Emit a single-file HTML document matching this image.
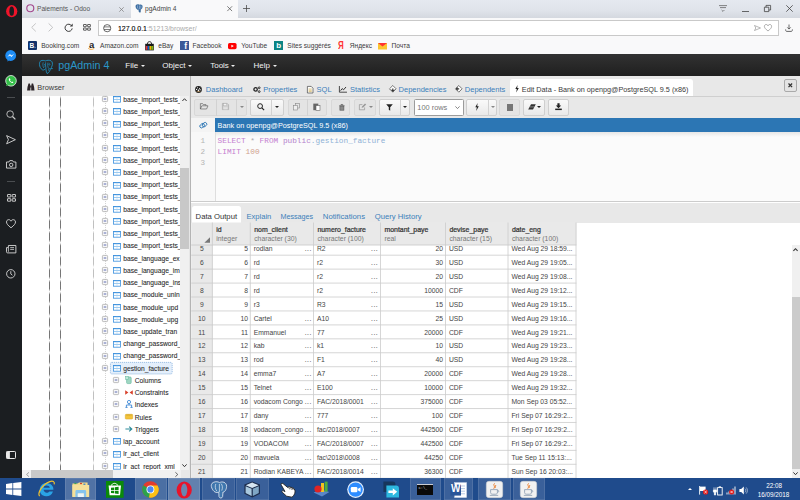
<!DOCTYPE html>
<html lang="fr"><head><meta charset="utf-8"><title>pgAdmin 4</title>
<style>
html,body{margin:0;padding:0;background:#fff;}
body{width:800px;height:500px;overflow:hidden;font-family:"Liberation Sans",sans-serif;}
#root{position:relative;width:800px;height:500px;overflow:hidden;background:#fff;}
.a{position:absolute;}
.t{position:absolute;white-space:nowrap;line-height:1;}
svg{position:absolute;overflow:visible;}
/* chrome */
#side{left:0;top:0;width:22px;height:478px;background:#1b1e21;}
#tabbar{left:22px;top:0;width:778px;height:17.5px;background:linear-gradient(#e5e9f0 0%,#dfe3ea 60%,#d4d8df 100%);}
#tab2{left:131px;top:0;width:106.5px;height:17.5px;background:#f9f9fa;}
#addr{left:22px;top:17.5px;width:778px;height:20px;background:#f9f9fa;}
#abox{left:98px;top:19.8px;width:680.6px;height:16px;background:#fff;border:0.8px solid #c9c9c9;box-sizing:border-box;}
#bm{left:22px;top:37.5px;width:778px;height:16.5px;background:#f9f9fa;}
.bmt{font-size:6.6px;color:#3a3a3a;top:42.7px;}
.tabt{font-size:6.6px;color:#555;top:6.2px;}
/* pgadmin */
#nav{left:22px;top:54px;width:778px;height:22px;background:linear-gradient(#323232,#1f1f1f);}
.menu{font-size:8px;color:#f2f2f2;top:62px;}
#bpanel{left:22px;top:76px;width:168px;height:402.5px;background:#fff;}
#bhead{left:22px;top:76px;width:168px;height:19.5px;background:#e8e8e8;}
#split{left:190.2px;top:76px;width:0.9px;height:402.5px;background:#b4b4b4;}
#rtabs{left:191px;top:76px;width:609px;height:20px;background:#e8e8e8;}
.rt{font-size:7.5px;color:#3b7fba;top:85.8px;}
#rtool{left:191px;top:96px;width:609px;height:22px;background:#e8e8e8;border-top:0.8px solid #cfcfcf;box-sizing:border-box;}
.btn{position:absolute;top:99.4px;height:16.4px;background:linear-gradient(#fafafa,#e9e9e9);border:0.7px solid #cfcfcf;box-sizing:border-box;border-radius:2px;}
.btn.dis{background:#e4e4e4;border-color:#d8d8d8;}
.bdiv{position:absolute;top:99.4px;height:16.4px;width:0.7px;background:#d2d2d2;}
#bluebar{left:215px;top:118px;width:585px;height:14px;background:#2c76b4;}
.tree{font-size:6.7px;color:#2a2a2a;line-height:10px;-webkit-text-stroke:0.08px #2a2a2a;}
.grid{font-size:6.75px;color:#444;}
.cell{position:absolute;box-sizing:border-box;border-right:0.8px solid #d0d0d0;border-bottom:0.8px solid #d0d0d0;background:#fff;overflow:hidden;}
.rn{background:#efefef;}
.hd{background:#ebebeb;}
#task{left:0;top:478px;width:800px;height:22px;background:#1f4b8c;}
</style></head>
<body>
<div id="root">
<div class="a" id="tabbar"></div>
<div class="a" id="tab2"></div>
<svg style="left:26.2px;top:4.4px" width="8.6" height="8.6" viewBox="0 0 8.6 8.6"><circle cx="4.3" cy="4.3" r="3.5" fill="none" stroke="#a3478d" stroke-width="1.15"/></svg>
<div class="t tabt" style="left:37px">Paiements - Odoo</div>
<svg style="left:119px;top:6.5px" width="5" height="5" viewBox="0 0 5 5"><path d="M0.3 0.3L4.7 4.7M4.7 0.3L0.3 4.7" stroke="#777" stroke-width="0.7" fill="none"/></svg>
<svg style="left:134.5px;top:4px" width="8" height="9" viewBox="0 0 8 9"><path d="M1 1.2C2 0.2 4 0.3 4.8 1C6 0.3 7.6 1 7.3 3C7 4.6 6 5.6 5.6 5.2L5.4 8.2C4.6 8.6 3.9 8 3.9 7L3.7 5.3C2.6 6 1.4 5 1 3.4C0.7 2.4 0.7 1.7 1 1.2Z" fill="#3a6ea5" stroke="#2b5a8c" stroke-width="0.4"/><path d="M2.6 1.4C2.2 2.6 2.4 3.8 3 4.6M4.4 1.4V5.2M5.8 1.6C6.2 2.6 6 3.8 5.6 4.6" stroke="#e4ecf5" stroke-width="0.45" fill="none"/></svg>
<div class="t tabt" style="left:145px;color:#444">pgAdmin 4</div>
<svg style="left:226.8px;top:6.3px" width="5.4" height="5.4" viewBox="0 0 5 5"><path d="M0.3 0.3L4.7 4.7M4.7 0.3L0.3 4.7" stroke="#555" stroke-width="0.7" fill="none"/></svg>
<svg style="left:242.6px;top:5.2px" width="7" height="7" viewBox="0 0 7 7"><path d="M3.5 0V7M0 3.5H7" stroke="#444" stroke-width="0.75" fill="none"/></svg>
<svg style="left:719px;top:4.5px" width="8" height="8" viewBox="0 0 8 8"><path d="M0 0.6H8M1 2.6H7M2.6 5L4 6.4L5.4 5" stroke="#555" stroke-width="0.7" fill="none"/></svg>
<svg style="left:742px;top:10.8px" width="7" height="1" viewBox="0 0 7 1"><path d="M0 0.5H7" stroke="#444" stroke-width="0.8"/></svg>
<svg style="left:764px;top:5px" width="7" height="7" viewBox="0 0 7 7"><path d="M0.4 2.2H4.8V6.6H0.4ZM2 2.2V0.4H6.6V5H4.8" stroke="#444" stroke-width="0.8" fill="none"/></svg>
<svg style="left:786px;top:5.2px" width="7" height="7" viewBox="0 0 7 7"><path d="M0.3 0.3L6.7 6.7M6.7 0.3L0.3 6.7" stroke="#444" stroke-width="0.8" fill="none"/></svg>
<div class="a" id="addr"></div>
<div class="a" id="abox"></div>
<svg style="left:30.6px;top:23.2px" width="5.4" height="8.8" viewBox="0 0 5.4 8.8"><path d="M4.8 0.4L0.7 4.4L4.8 8.4" stroke="#b8b8b8" stroke-width="0.8" fill="none"/></svg>
<svg style="left:48.4px;top:23.2px" width="5.4" height="8.8" viewBox="0 0 5.4 8.8"><path d="M0.6 0.4L4.7 4.4L0.6 8.4" stroke="#b8b8b8" stroke-width="0.8" fill="none"/></svg>
<svg style="left:64.4px;top:23px" width="9.4" height="9.4" viewBox="0 0 9.4 9.4"><path d="M7.7 2.9A3.6 3.6 0 1 0 8.2 5.4" stroke="#3a3a3a" stroke-width="1" fill="none"/><path d="M8.7 0.6V3.5H5.8Z" fill="#3a3a3a"/></svg>
<svg style="left:82.8px;top:24.4px" width="8" height="7" viewBox="0 0 8 7"><g fill="none" stroke="#3a3a3a" stroke-width="0.8"><rect x="0.5" y="0.5" width="2.8" height="2.2" rx="0.2"/><rect x="4.6" y="0.5" width="2.8" height="2.2" rx="0.2"/><rect x="0.5" y="4" width="2.8" height="2.2" rx="0.2"/><rect x="4.6" y="4" width="2.8" height="2.2" rx="0.2"/></g></svg>
<svg style="left:103px;top:23.8px" width="8.4" height="8.4" viewBox="0 0 8.4 8.4"><g fill="none" stroke="#444" stroke-width="0.8"><circle cx="4.2" cy="4.2" r="3.6"/><path d="M1 2.9H7.4M1 5.5H7.4" stroke-width="0.7"/></g></svg>
<div class="t" style="left:118px;top:25.7px;font-size:6.95px;color:#222"><b style="font-weight:normal;color:#000;-webkit-text-stroke:0.12px #000">127.0.0.1</b><span style="color:#ababab">:51213/browser/</span></div>
<svg style="left:753.5px;top:24.5px" width="7" height="6" viewBox="0 0 7 6"><path d="M0.5 0.5L6.5 3L0.5 5.5L1.8 3Z" stroke="#888" stroke-width="0.6" fill="none"/></svg>
<svg style="left:764px;top:24px" width="8" height="7.5" viewBox="0 0 8 7.5"><path d="M4 7C1.5 5 0.4 3.8 0.4 2.4C0.4 0.2 3.2 -0.2 4 1.8C4.8 -0.2 7.6 0.2 7.6 2.4C7.6 3.8 6.5 5 4 7Z" stroke="#777" stroke-width="0.6" fill="none"/></svg>
<svg style="left:785px;top:23.5px" width="8" height="8" viewBox="0 0 8 8"><path d="M4 0.5V5M2.3 3.4L4 5.1L5.7 3.4M0.6 5.4C0.6 7.4 1.4 7.4 2 7.4H6C6.6 7.4 7.4 7.4 7.4 5.4" stroke="#444" stroke-width="0.8" fill="none"/></svg>
<div class="a" id="bm"></div>
<div class="a" style="left:28px;top:41.3px;width:8.6px;height:8.6px;background:#12326b;border-radius:1px"></div><div class="t" style="left:29.5px;top:42.6px;font-size:6.5px;font-weight:bold;color:#fff">B<span style="color:#4fb3e8">.</span></div>
<div class="t bmt" style="left:41.2px">Booking.com</div>
<div class="t" style="left:89px;top:39.6px;font-size:9.5px;font-weight:bold;color:#222">a</div><svg style="left:88.3px;top:48.3px" width="6.5" height="2" viewBox="0 0 6.5 2"><path d="M0.2 0.3C2 1.8 4.5 1.8 6.3 0.3" stroke="#f39a1e" stroke-width="0.8" fill="none"/></svg>
<div class="t bmt" style="left:100px">Amazon.com</div>
<svg style="left:145px;top:40.6px" width="9" height="9.6" viewBox="0 0 9 9.6"><path d="M2.4 3C2.4 -0.2 6.6 -0.2 6.6 3" stroke="#1a1a1a" stroke-width="0.9" fill="none"/><rect x="0.2" y="2.8" width="8.6" height="6.6" fill="#1a1a1a"/><rect x="0.8" y="5" width="1.85" height="3.8" fill="#e53238"/><rect x="2.65" y="5" width="1.85" height="3.8" fill="#0064d2"/><rect x="4.5" y="5" width="1.85" height="3.8" fill="#f5af02"/><rect x="6.35" y="5" width="1.85" height="3.8" fill="#86b817"/></svg>
<div class="t bmt" style="left:158.3px">eBay</div>
<div class="a" style="left:180.3px;top:41.3px;width:8.6px;height:8.6px;background:#3b5998"></div><div class="t" style="left:184.3px;top:42.2px;font-size:8.6px;font-weight:bold;color:#fff">f</div>
<div class="t bmt" style="left:192.5px">Facebook</div>
<svg style="left:228.3px;top:42.5px" width="8.6" height="6.2" viewBox="0 0 8.6 6.2"><rect width="8.6" height="6.2" rx="1.6" fill="#f00"/><path d="M3.4 1.7L5.8 3.1L3.4 4.5Z" fill="#fff"/></svg>
<div class="t bmt" style="left:241.3px">YouTube</div>
<div class="a" style="left:274.2px;top:41.3px;width:8.6px;height:8.6px;background:#0c8484"></div><div class="t" style="left:276.3px;top:41.6px;font-size:8px;font-weight:bold;color:#fff">b</div>
<div class="t bmt" style="left:287.3px">Sites suggérés</div>
<div class="t" style="left:338.3px;top:40.6px;font-size:10px;color:#f33;font-weight:bold;transform:scaleX(0.8);transform-origin:0 0">Я</div>
<div class="t bmt" style="left:349.8px">Яндекс</div>
<svg style="left:378px;top:42.5px" width="9" height="6.5" viewBox="0 0 9 6.5"><rect width="9" height="6.5" fill="#fbc531"/><path d="M0 0H9L4.5 3.6Z" fill="#f33"/></svg>
<div class="t bmt" style="left:391.6px">Почта</div>
<div class="a" id="nav"></div>
<svg style="left:39px;top:59.8px" width="14" height="14" viewBox="0 0 14 14"><path d="M1.8 0.8C3.4 0.1 5 0.4 6.4 0.9C8 0.2 10.4 0 12 0.8C13.6 1.8 13.8 4 13 6L12.4 7.4L13.4 8.7L11.6 8.5C11.2 9.6 11 10.4 10.6 11.2C10 12.4 9 13.2 8.2 13.6C7.4 12.6 7.2 11 7 9.6L6.6 8.6C5.6 9.8 4.4 10.4 3.4 9.8C1.6 8.6 0.6 6.6 0.5 4.4C0.4 2.8 0.8 1.4 1.8 0.8Z" stroke="#1f9bd0" stroke-width="0.8" fill="none" stroke-linejoin="round"/><path d="M4.2 2.4C3.6 4 3.8 6.4 4.8 8M5 4.6C6.2 4.2 6.6 6 5.6 6.8M6.6 2.4C6.4 4.6 6.6 6.6 7 8.6M9 2.6C8.4 4.6 8.8 7 9.6 8.6M9.6 10.6C9.4 9.6 9.8 8.8 10.8 8.4" stroke="#1f9bd0" stroke-width="0.65" fill="none"/><circle cx="10.4" cy="4.4" r="0.7" fill="none" stroke="#1f9bd0" stroke-width="0.5"/></svg>
<div class="t" style="left:58.3px;top:60.2px;font-size:10.7px;color:#2a96c8">pgAdmin 4</div>
<div class="t menu" style="left:125.3px">File<span style="display:inline-block;width:0;height:0;border-left:2.3px solid transparent;border-right:2.3px solid transparent;border-top:2.5px solid #eee;margin-left:2.6px;vertical-align:1.1px"></span></div>
<div class="t menu" style="left:162.3px">Object<span style="display:inline-block;width:0;height:0;border-left:2.3px solid transparent;border-right:2.3px solid transparent;border-top:2.5px solid #eee;margin-left:2.6px;vertical-align:1.1px"></span></div>
<div class="t menu" style="left:210.2px">Tools<span style="display:inline-block;width:0;height:0;border-left:2.3px solid transparent;border-right:2.3px solid transparent;border-top:2.5px solid #eee;margin-left:2.6px;vertical-align:1.1px"></span></div>
<div class="t menu" style="left:253.6px">Help<span style="display:inline-block;width:0;height:0;border-left:2.3px solid transparent;border-right:2.3px solid transparent;border-top:2.5px solid #eee;margin-left:2.6px;vertical-align:1.1px"></span></div>
<div class="a" id="bpanel"></div>
<div class="a" id="bhead"></div>
<svg style="left:26.8px;top:83.4px" width="7.6" height="7.6" viewBox="0 0 7.6 7.6"><path d="M0.1 7.4L0.5 4L1.5 0.4H2.9L3.4 3V7.4ZM4.2 7.4V3L4.7 0.4H6.1L7.1 4L7.5 7.4Z" fill="#2c2428"/><rect x="3.2" y="2.6" width="1.2" height="2" fill="#2c2428"/></svg>
<div class="t" style="left:37.3px;top:84.2px;font-size:7.4px;color:#3a3a3a">Browser</div>
<div class="a" style="left:49.1px;top:95.5px;width:0.9px;height:374.5px;background:repeating-linear-gradient(to bottom,rgba(80,80,80,0) 0,rgba(80,80,80,0.78) 3px,rgba(80,80,80,0.78) 9.2px,rgba(80,80,80,0) 12.23px)"></div>
<div class="a" style="left:60.1px;top:95.5px;width:0.9px;height:374.5px;background:repeating-linear-gradient(to bottom,rgba(80,80,80,0) 0,rgba(80,80,80,0.78) 3px,rgba(80,80,80,0.78) 9.2px,rgba(80,80,80,0) 12.23px)"></div>
<div class="a" style="left:93.3px;top:95.5px;width:0.9px;height:374.5px;background:repeating-linear-gradient(to bottom,rgba(80,80,80,0) 0,rgba(80,80,80,0.36) 3px,rgba(80,80,80,0.36) 9.2px,rgba(80,80,80,0) 12.23px)"></div>
<div class="a" style="left:104.9px;top:95.5px;width:0;height:374.5px;border-left:0.7px dotted #d4d4d4"></div>
<svg style="left:102.20px;top:95.70px" width="6" height="6" viewBox="0 0 6 6"><rect x="0.4" y="0.4" width="5.2" height="5.2" rx="0.8" fill="#f7f7f7" stroke="#a4a4a4" stroke-width="0.7"/><path d="M1.7 3H4.3" stroke="#4a5aa8" stroke-width="0.9"/></svg><svg style="left:113.4px;top:96.0px" width="8" height="6.6" viewBox="0 0 8 6.6"><rect x="0.4" y="0.4" width="7.2" height="5.8" fill="#fff" stroke="#3a8fdd" stroke-width="0.8"/><path d="M0.4 0.7H7.6" stroke="#3a8fdd" stroke-width="0.9"/><path d="M0.6 3.5H7.4" stroke="#58a6e8" stroke-width="0.6"/><path d="M4 0.6V6" stroke="#a8d2f4" stroke-width="0.5"/></svg><div class="t tree" style="left:123.2px;top:94.6px;width:56.8px;overflow:hidden">base_import_tests_</div>
<svg style="left:102.20px;top:107.93px" width="6" height="6" viewBox="0 0 6 6"><rect x="0.4" y="0.4" width="5.2" height="5.2" rx="0.8" fill="#f7f7f7" stroke="#a4a4a4" stroke-width="0.7"/><path d="M1.7 3H4.3" stroke="#4a5aa8" stroke-width="0.9"/></svg><svg style="left:113.4px;top:108.2px" width="8" height="6.6" viewBox="0 0 8 6.6"><rect x="0.4" y="0.4" width="7.2" height="5.8" fill="#fff" stroke="#3a8fdd" stroke-width="0.8"/><path d="M0.4 0.7H7.6" stroke="#3a8fdd" stroke-width="0.9"/><path d="M0.6 3.5H7.4" stroke="#58a6e8" stroke-width="0.6"/><path d="M4 0.6V6" stroke="#a8d2f4" stroke-width="0.5"/></svg><div class="t tree" style="left:123.2px;top:106.8px;width:56.8px;overflow:hidden">base_import_tests_</div>
<svg style="left:102.20px;top:120.16px" width="6" height="6" viewBox="0 0 6 6"><rect x="0.4" y="0.4" width="5.2" height="5.2" rx="0.8" fill="#f7f7f7" stroke="#a4a4a4" stroke-width="0.7"/><path d="M1.7 3H4.3" stroke="#4a5aa8" stroke-width="0.9"/></svg><svg style="left:113.4px;top:120.5px" width="8" height="6.6" viewBox="0 0 8 6.6"><rect x="0.4" y="0.4" width="7.2" height="5.8" fill="#fff" stroke="#3a8fdd" stroke-width="0.8"/><path d="M0.4 0.7H7.6" stroke="#3a8fdd" stroke-width="0.9"/><path d="M0.6 3.5H7.4" stroke="#58a6e8" stroke-width="0.6"/><path d="M4 0.6V6" stroke="#a8d2f4" stroke-width="0.5"/></svg><div class="t tree" style="left:123.2px;top:119.1px;width:56.8px;overflow:hidden">base_import_tests_</div>
<svg style="left:102.20px;top:132.39px" width="6" height="6" viewBox="0 0 6 6"><rect x="0.4" y="0.4" width="5.2" height="5.2" rx="0.8" fill="#f7f7f7" stroke="#a4a4a4" stroke-width="0.7"/><path d="M1.7 3H4.3" stroke="#4a5aa8" stroke-width="0.9"/></svg><svg style="left:113.4px;top:132.7px" width="8" height="6.6" viewBox="0 0 8 6.6"><rect x="0.4" y="0.4" width="7.2" height="5.8" fill="#fff" stroke="#3a8fdd" stroke-width="0.8"/><path d="M0.4 0.7H7.6" stroke="#3a8fdd" stroke-width="0.9"/><path d="M0.6 3.5H7.4" stroke="#58a6e8" stroke-width="0.6"/><path d="M4 0.6V6" stroke="#a8d2f4" stroke-width="0.5"/></svg><div class="t tree" style="left:123.2px;top:131.3px;width:56.8px;overflow:hidden">base_import_tests_</div>
<svg style="left:102.20px;top:144.62px" width="6" height="6" viewBox="0 0 6 6"><rect x="0.4" y="0.4" width="5.2" height="5.2" rx="0.8" fill="#f7f7f7" stroke="#a4a4a4" stroke-width="0.7"/><path d="M1.7 3H4.3" stroke="#4a5aa8" stroke-width="0.9"/></svg><svg style="left:113.4px;top:144.9px" width="8" height="6.6" viewBox="0 0 8 6.6"><rect x="0.4" y="0.4" width="7.2" height="5.8" fill="#fff" stroke="#3a8fdd" stroke-width="0.8"/><path d="M0.4 0.7H7.6" stroke="#3a8fdd" stroke-width="0.9"/><path d="M0.6 3.5H7.4" stroke="#58a6e8" stroke-width="0.6"/><path d="M4 0.6V6" stroke="#a8d2f4" stroke-width="0.5"/></svg><div class="t tree" style="left:123.2px;top:143.5px;width:56.8px;overflow:hidden">base_import_tests_</div>
<svg style="left:102.20px;top:156.85px" width="6" height="6" viewBox="0 0 6 6"><rect x="0.4" y="0.4" width="5.2" height="5.2" rx="0.8" fill="#f7f7f7" stroke="#a4a4a4" stroke-width="0.7"/><path d="M1.7 3H4.3" stroke="#4a5aa8" stroke-width="0.9"/></svg><svg style="left:113.4px;top:157.2px" width="8" height="6.6" viewBox="0 0 8 6.6"><rect x="0.4" y="0.4" width="7.2" height="5.8" fill="#fff" stroke="#3a8fdd" stroke-width="0.8"/><path d="M0.4 0.7H7.6" stroke="#3a8fdd" stroke-width="0.9"/><path d="M0.6 3.5H7.4" stroke="#58a6e8" stroke-width="0.6"/><path d="M4 0.6V6" stroke="#a8d2f4" stroke-width="0.5"/></svg><div class="t tree" style="left:123.2px;top:155.8px;width:56.8px;overflow:hidden">base_import_tests_</div>
<svg style="left:102.20px;top:169.08px" width="6" height="6" viewBox="0 0 6 6"><rect x="0.4" y="0.4" width="5.2" height="5.2" rx="0.8" fill="#f7f7f7" stroke="#a4a4a4" stroke-width="0.7"/><path d="M1.7 3H4.3" stroke="#4a5aa8" stroke-width="0.9"/></svg><svg style="left:113.4px;top:169.4px" width="8" height="6.6" viewBox="0 0 8 6.6"><rect x="0.4" y="0.4" width="7.2" height="5.8" fill="#fff" stroke="#3a8fdd" stroke-width="0.8"/><path d="M0.4 0.7H7.6" stroke="#3a8fdd" stroke-width="0.9"/><path d="M0.6 3.5H7.4" stroke="#58a6e8" stroke-width="0.6"/><path d="M4 0.6V6" stroke="#a8d2f4" stroke-width="0.5"/></svg><div class="t tree" style="left:123.2px;top:168.0px;width:56.8px;overflow:hidden">base_import_tests_</div>
<svg style="left:102.20px;top:181.31px" width="6" height="6" viewBox="0 0 6 6"><rect x="0.4" y="0.4" width="5.2" height="5.2" rx="0.8" fill="#f7f7f7" stroke="#a4a4a4" stroke-width="0.7"/><path d="M1.7 3H4.3" stroke="#4a5aa8" stroke-width="0.9"/></svg><svg style="left:113.4px;top:181.6px" width="8" height="6.6" viewBox="0 0 8 6.6"><rect x="0.4" y="0.4" width="7.2" height="5.8" fill="#fff" stroke="#3a8fdd" stroke-width="0.8"/><path d="M0.4 0.7H7.6" stroke="#3a8fdd" stroke-width="0.9"/><path d="M0.6 3.5H7.4" stroke="#58a6e8" stroke-width="0.6"/><path d="M4 0.6V6" stroke="#a8d2f4" stroke-width="0.5"/></svg><div class="t tree" style="left:123.2px;top:180.2px;width:56.8px;overflow:hidden">base_import_tests_</div>
<svg style="left:102.20px;top:193.54px" width="6" height="6" viewBox="0 0 6 6"><rect x="0.4" y="0.4" width="5.2" height="5.2" rx="0.8" fill="#f7f7f7" stroke="#a4a4a4" stroke-width="0.7"/><path d="M1.7 3H4.3" stroke="#4a5aa8" stroke-width="0.9"/></svg><svg style="left:113.4px;top:193.8px" width="8" height="6.6" viewBox="0 0 8 6.6"><rect x="0.4" y="0.4" width="7.2" height="5.8" fill="#fff" stroke="#3a8fdd" stroke-width="0.8"/><path d="M0.4 0.7H7.6" stroke="#3a8fdd" stroke-width="0.9"/><path d="M0.6 3.5H7.4" stroke="#58a6e8" stroke-width="0.6"/><path d="M4 0.6V6" stroke="#a8d2f4" stroke-width="0.5"/></svg><div class="t tree" style="left:123.2px;top:192.4px;width:56.8px;overflow:hidden">base_import_tests_</div>
<svg style="left:102.20px;top:205.77px" width="6" height="6" viewBox="0 0 6 6"><rect x="0.4" y="0.4" width="5.2" height="5.2" rx="0.8" fill="#f7f7f7" stroke="#a4a4a4" stroke-width="0.7"/><path d="M1.7 3H4.3" stroke="#4a5aa8" stroke-width="0.9"/></svg><svg style="left:113.4px;top:206.1px" width="8" height="6.6" viewBox="0 0 8 6.6"><rect x="0.4" y="0.4" width="7.2" height="5.8" fill="#fff" stroke="#3a8fdd" stroke-width="0.8"/><path d="M0.4 0.7H7.6" stroke="#3a8fdd" stroke-width="0.9"/><path d="M0.6 3.5H7.4" stroke="#58a6e8" stroke-width="0.6"/><path d="M4 0.6V6" stroke="#a8d2f4" stroke-width="0.5"/></svg><div class="t tree" style="left:123.2px;top:204.7px;width:56.8px;overflow:hidden">base_import_tests_</div>
<svg style="left:102.20px;top:218.00px" width="6" height="6" viewBox="0 0 6 6"><rect x="0.4" y="0.4" width="5.2" height="5.2" rx="0.8" fill="#f7f7f7" stroke="#a4a4a4" stroke-width="0.7"/><path d="M1.7 3H4.3" stroke="#4a5aa8" stroke-width="0.9"/></svg><svg style="left:113.4px;top:218.3px" width="8" height="6.6" viewBox="0 0 8 6.6"><rect x="0.4" y="0.4" width="7.2" height="5.8" fill="#fff" stroke="#3a8fdd" stroke-width="0.8"/><path d="M0.4 0.7H7.6" stroke="#3a8fdd" stroke-width="0.9"/><path d="M0.6 3.5H7.4" stroke="#58a6e8" stroke-width="0.6"/><path d="M4 0.6V6" stroke="#a8d2f4" stroke-width="0.5"/></svg><div class="t tree" style="left:123.2px;top:216.9px;width:56.8px;overflow:hidden">base_import_tests_</div>
<svg style="left:102.20px;top:230.23px" width="6" height="6" viewBox="0 0 6 6"><rect x="0.4" y="0.4" width="5.2" height="5.2" rx="0.8" fill="#f7f7f7" stroke="#a4a4a4" stroke-width="0.7"/><path d="M1.7 3H4.3" stroke="#4a5aa8" stroke-width="0.9"/></svg><svg style="left:113.4px;top:230.5px" width="8" height="6.6" viewBox="0 0 8 6.6"><rect x="0.4" y="0.4" width="7.2" height="5.8" fill="#fff" stroke="#3a8fdd" stroke-width="0.8"/><path d="M0.4 0.7H7.6" stroke="#3a8fdd" stroke-width="0.9"/><path d="M0.6 3.5H7.4" stroke="#58a6e8" stroke-width="0.6"/><path d="M4 0.6V6" stroke="#a8d2f4" stroke-width="0.5"/></svg><div class="t tree" style="left:123.2px;top:229.1px;width:56.8px;overflow:hidden">base_import_tests_</div>
<svg style="left:102.20px;top:242.46px" width="6" height="6" viewBox="0 0 6 6"><rect x="0.4" y="0.4" width="5.2" height="5.2" rx="0.8" fill="#f7f7f7" stroke="#a4a4a4" stroke-width="0.7"/><path d="M1.7 3H4.3" stroke="#4a5aa8" stroke-width="0.9"/></svg><svg style="left:113.4px;top:242.8px" width="8" height="6.6" viewBox="0 0 8 6.6"><rect x="0.4" y="0.4" width="7.2" height="5.8" fill="#fff" stroke="#3a8fdd" stroke-width="0.8"/><path d="M0.4 0.7H7.6" stroke="#3a8fdd" stroke-width="0.9"/><path d="M0.6 3.5H7.4" stroke="#58a6e8" stroke-width="0.6"/><path d="M4 0.6V6" stroke="#a8d2f4" stroke-width="0.5"/></svg><div class="t tree" style="left:123.2px;top:241.4px;width:56.8px;overflow:hidden">base_import_tests_</div>
<svg style="left:102.20px;top:254.69px" width="6" height="6" viewBox="0 0 6 6"><rect x="0.4" y="0.4" width="5.2" height="5.2" rx="0.8" fill="#f7f7f7" stroke="#a4a4a4" stroke-width="0.7"/><path d="M1.7 3H4.3" stroke="#4a5aa8" stroke-width="0.9"/></svg><svg style="left:113.4px;top:255.0px" width="8" height="6.6" viewBox="0 0 8 6.6"><rect x="0.4" y="0.4" width="7.2" height="5.8" fill="#fff" stroke="#3a8fdd" stroke-width="0.8"/><path d="M0.4 0.7H7.6" stroke="#3a8fdd" stroke-width="0.9"/><path d="M0.6 3.5H7.4" stroke="#58a6e8" stroke-width="0.6"/><path d="M4 0.6V6" stroke="#a8d2f4" stroke-width="0.5"/></svg><div class="t tree" style="left:123.2px;top:253.6px;width:56.8px;overflow:hidden">base_language_ex</div>
<svg style="left:102.20px;top:266.92px" width="6" height="6" viewBox="0 0 6 6"><rect x="0.4" y="0.4" width="5.2" height="5.2" rx="0.8" fill="#f7f7f7" stroke="#a4a4a4" stroke-width="0.7"/><path d="M1.7 3H4.3" stroke="#4a5aa8" stroke-width="0.9"/></svg><svg style="left:113.4px;top:267.2px" width="8" height="6.6" viewBox="0 0 8 6.6"><rect x="0.4" y="0.4" width="7.2" height="5.8" fill="#fff" stroke="#3a8fdd" stroke-width="0.8"/><path d="M0.4 0.7H7.6" stroke="#3a8fdd" stroke-width="0.9"/><path d="M0.6 3.5H7.4" stroke="#58a6e8" stroke-width="0.6"/><path d="M4 0.6V6" stroke="#a8d2f4" stroke-width="0.5"/></svg><div class="t tree" style="left:123.2px;top:265.8px;width:56.8px;overflow:hidden">base_language_im</div>
<svg style="left:102.20px;top:279.15px" width="6" height="6" viewBox="0 0 6 6"><rect x="0.4" y="0.4" width="5.2" height="5.2" rx="0.8" fill="#f7f7f7" stroke="#a4a4a4" stroke-width="0.7"/><path d="M1.7 3H4.3" stroke="#4a5aa8" stroke-width="0.9"/></svg><svg style="left:113.4px;top:279.5px" width="8" height="6.6" viewBox="0 0 8 6.6"><rect x="0.4" y="0.4" width="7.2" height="5.8" fill="#fff" stroke="#3a8fdd" stroke-width="0.8"/><path d="M0.4 0.7H7.6" stroke="#3a8fdd" stroke-width="0.9"/><path d="M0.6 3.5H7.4" stroke="#58a6e8" stroke-width="0.6"/><path d="M4 0.6V6" stroke="#a8d2f4" stroke-width="0.5"/></svg><div class="t tree" style="left:123.2px;top:278.1px;width:56.8px;overflow:hidden">base_language_ins</div>
<svg style="left:102.20px;top:291.38px" width="6" height="6" viewBox="0 0 6 6"><rect x="0.4" y="0.4" width="5.2" height="5.2" rx="0.8" fill="#f7f7f7" stroke="#a4a4a4" stroke-width="0.7"/><path d="M1.7 3H4.3" stroke="#4a5aa8" stroke-width="0.9"/></svg><svg style="left:113.4px;top:291.7px" width="8" height="6.6" viewBox="0 0 8 6.6"><rect x="0.4" y="0.4" width="7.2" height="5.8" fill="#fff" stroke="#3a8fdd" stroke-width="0.8"/><path d="M0.4 0.7H7.6" stroke="#3a8fdd" stroke-width="0.9"/><path d="M0.6 3.5H7.4" stroke="#58a6e8" stroke-width="0.6"/><path d="M4 0.6V6" stroke="#a8d2f4" stroke-width="0.5"/></svg><div class="t tree" style="left:123.2px;top:290.3px;width:56.8px;overflow:hidden">base_module_unin</div>
<svg style="left:102.20px;top:303.61px" width="6" height="6" viewBox="0 0 6 6"><rect x="0.4" y="0.4" width="5.2" height="5.2" rx="0.8" fill="#f7f7f7" stroke="#a4a4a4" stroke-width="0.7"/><path d="M1.7 3H4.3" stroke="#4a5aa8" stroke-width="0.9"/></svg><svg style="left:113.4px;top:303.9px" width="8" height="6.6" viewBox="0 0 8 6.6"><rect x="0.4" y="0.4" width="7.2" height="5.8" fill="#fff" stroke="#3a8fdd" stroke-width="0.8"/><path d="M0.4 0.7H7.6" stroke="#3a8fdd" stroke-width="0.9"/><path d="M0.6 3.5H7.4" stroke="#58a6e8" stroke-width="0.6"/><path d="M4 0.6V6" stroke="#a8d2f4" stroke-width="0.5"/></svg><div class="t tree" style="left:123.2px;top:302.5px;width:56.8px;overflow:hidden">base_module_upd</div>
<svg style="left:102.20px;top:315.84px" width="6" height="6" viewBox="0 0 6 6"><rect x="0.4" y="0.4" width="5.2" height="5.2" rx="0.8" fill="#f7f7f7" stroke="#a4a4a4" stroke-width="0.7"/><path d="M1.7 3H4.3" stroke="#4a5aa8" stroke-width="0.9"/></svg><svg style="left:113.4px;top:316.1px" width="8" height="6.6" viewBox="0 0 8 6.6"><rect x="0.4" y="0.4" width="7.2" height="5.8" fill="#fff" stroke="#3a8fdd" stroke-width="0.8"/><path d="M0.4 0.7H7.6" stroke="#3a8fdd" stroke-width="0.9"/><path d="M0.6 3.5H7.4" stroke="#58a6e8" stroke-width="0.6"/><path d="M4 0.6V6" stroke="#a8d2f4" stroke-width="0.5"/></svg><div class="t tree" style="left:123.2px;top:314.7px;width:56.8px;overflow:hidden">base_module_upg</div>
<svg style="left:102.20px;top:328.07px" width="6" height="6" viewBox="0 0 6 6"><rect x="0.4" y="0.4" width="5.2" height="5.2" rx="0.8" fill="#f7f7f7" stroke="#a4a4a4" stroke-width="0.7"/><path d="M1.7 3H4.3" stroke="#4a5aa8" stroke-width="0.9"/></svg><svg style="left:113.4px;top:328.4px" width="8" height="6.6" viewBox="0 0 8 6.6"><rect x="0.4" y="0.4" width="7.2" height="5.8" fill="#fff" stroke="#3a8fdd" stroke-width="0.8"/><path d="M0.4 0.7H7.6" stroke="#3a8fdd" stroke-width="0.9"/><path d="M0.6 3.5H7.4" stroke="#58a6e8" stroke-width="0.6"/><path d="M4 0.6V6" stroke="#a8d2f4" stroke-width="0.5"/></svg><div class="t tree" style="left:123.2px;top:327.0px;width:56.8px;overflow:hidden">base_update_tran</div>
<svg style="left:102.20px;top:340.30px" width="6" height="6" viewBox="0 0 6 6"><rect x="0.4" y="0.4" width="5.2" height="5.2" rx="0.8" fill="#f7f7f7" stroke="#a4a4a4" stroke-width="0.7"/><path d="M1.7 3H4.3" stroke="#4a5aa8" stroke-width="0.9"/></svg><svg style="left:113.4px;top:340.6px" width="8" height="6.6" viewBox="0 0 8 6.6"><rect x="0.4" y="0.4" width="7.2" height="5.8" fill="#fff" stroke="#3a8fdd" stroke-width="0.8"/><path d="M0.4 0.7H7.6" stroke="#3a8fdd" stroke-width="0.9"/><path d="M0.6 3.5H7.4" stroke="#58a6e8" stroke-width="0.6"/><path d="M4 0.6V6" stroke="#a8d2f4" stroke-width="0.5"/></svg><div class="t tree" style="left:123.2px;top:339.2px;width:56.8px;overflow:hidden">change_password_</div>
<svg style="left:102.20px;top:352.53px" width="6" height="6" viewBox="0 0 6 6"><rect x="0.4" y="0.4" width="5.2" height="5.2" rx="0.8" fill="#f7f7f7" stroke="#a4a4a4" stroke-width="0.7"/><path d="M1.7 3H4.3" stroke="#4a5aa8" stroke-width="0.9"/></svg><svg style="left:113.4px;top:352.8px" width="8" height="6.6" viewBox="0 0 8 6.6"><rect x="0.4" y="0.4" width="7.2" height="5.8" fill="#fff" stroke="#3a8fdd" stroke-width="0.8"/><path d="M0.4 0.7H7.6" stroke="#3a8fdd" stroke-width="0.9"/><path d="M0.6 3.5H7.4" stroke="#58a6e8" stroke-width="0.6"/><path d="M4 0.6V6" stroke="#a8d2f4" stroke-width="0.5"/></svg><div class="t tree" style="left:123.2px;top:351.4px;width:56.8px;overflow:hidden">change_password_</div>
<svg style="left:102.20px;top:364.76px" width="6" height="6" viewBox="0 0 6 6"><rect x="0.4" y="0.4" width="5.2" height="5.2" rx="0.8" fill="#f7f7f7" stroke="#a4a4a4" stroke-width="0.7"/><path d="M1.7 3H4.3" stroke="#4a5aa8" stroke-width="0.9"/></svg><svg style="left:110.2px;top:362.16px" width="62.6" height="12.4" viewBox="0 0 62.6 12.4"><rect x="0.4" y="0.4" width="61.8" height="11.6" rx="1.4" fill="#e4effb" stroke="#6c9fd6" stroke-width="0.7" stroke-dasharray="1.1 0.9"/></svg><svg style="left:113.4px;top:365.1px" width="8" height="6.6" viewBox="0 0 8 6.6"><rect x="0.4" y="0.4" width="7.2" height="5.8" fill="#fff" stroke="#3a8fdd" stroke-width="0.8"/><path d="M0.4 0.7H7.6" stroke="#3a8fdd" stroke-width="0.9"/><path d="M0.6 3.5H7.4" stroke="#58a6e8" stroke-width="0.6"/><path d="M4 0.6V6" stroke="#a8d2f4" stroke-width="0.5"/></svg><div class="t tree" style="left:123.2px;top:363.7px;width:56.8px;overflow:hidden">gestion_facture</div>
<svg style="left:113.20px;top:376.99px" width="6" height="6" viewBox="0 0 6 6"><rect x="0.4" y="0.4" width="5.2" height="5.2" rx="0.8" fill="#f7f7f7" stroke="#a4a4a4" stroke-width="0.7"/><path d="M1.7 3H4.3" stroke="#4a5aa8" stroke-width="0.9"/></svg><svg style="left:124.5px;top:376.0px" width="7" height="8" viewBox="0 0 7 8"><rect x="1.6" y="1" width="4.6" height="6.6" rx="1" fill="#9fd6c2" stroke="#5fb59a" stroke-width="0.6"/><rect x="0.6" y="0.4" width="3" height="3" fill="#bfe6d8" stroke="#5fb59a" stroke-width="0.5"/></svg><div class="t tree" style="left:134.7px;top:375.9px">Columns</div>
<svg style="left:113.20px;top:389.22px" width="6" height="6" viewBox="0 0 6 6"><rect x="0.4" y="0.4" width="5.2" height="5.2" rx="0.8" fill="#f7f7f7" stroke="#a4a4a4" stroke-width="0.7"/><path d="M1.7 3H4.3" stroke="#4a5aa8" stroke-width="0.9"/></svg><svg style="left:124.5px;top:389.7px" width="8" height="5" viewBox="0 0 8 5"><path d="M0.2 0.2L3.4 2.5L0.2 4.8ZM7.8 0.2L4.6 2.5L7.8 4.8Z" fill="#d8402a"/></svg><div class="t tree" style="left:134.7px;top:388.1px">Constraints</div>
<svg style="left:113.20px;top:401.45px" width="6" height="6" viewBox="0 0 6 6"><rect x="0.4" y="0.4" width="5.2" height="5.2" rx="0.8" fill="#f7f7f7" stroke="#a4a4a4" stroke-width="0.7"/><path d="M1.7 3H4.3" stroke="#4a5aa8" stroke-width="0.9"/></svg><svg style="left:124.5px;top:400.4px" width="8" height="8" viewBox="0 0 8 8"><circle cx="4" cy="2" r="1.6" fill="none" stroke="#2f7fd0" stroke-width="0.8"/><path d="M4 3.6V5M1.4 7.4V5H6.6V7.4M0.4 7.4H2.6M5.4 7.4H7.6" stroke="#2f7fd0" stroke-width="0.8" fill="none"/></svg><div class="t tree" style="left:134.7px;top:400.3px">Indexes</div>
<svg style="left:113.20px;top:413.68px" width="6" height="6" viewBox="0 0 6 6"><rect x="0.4" y="0.4" width="5.2" height="5.2" rx="0.8" fill="#f7f7f7" stroke="#a4a4a4" stroke-width="0.7"/><path d="M1.7 3H4.3" stroke="#4a5aa8" stroke-width="0.9"/></svg><svg style="left:124.5px;top:414.0px" width="8" height="5.4" viewBox="0 0 8 5.4"><rect x="0.3" y="0.3" width="7.4" height="4.8" rx="0.8" fill="#f3c33c" stroke="#d9a521" stroke-width="0.5"/><path d="M2 0.4V2M3.4 0.4V1.6M4.8 0.4V2M6.2 0.4V1.6" stroke="#b98a12" stroke-width="0.4"/></svg><div class="t tree" style="left:134.7px;top:412.6px">Rules</div>
<svg style="left:113.20px;top:425.91px" width="6" height="6" viewBox="0 0 6 6"><rect x="0.4" y="0.4" width="5.2" height="5.2" rx="0.8" fill="#f7f7f7" stroke="#a4a4a4" stroke-width="0.7"/><path d="M1.7 3H4.3" stroke="#4a5aa8" stroke-width="0.9"/></svg><svg style="left:124.5px;top:425.9px" width="8" height="6" viewBox="0 0 8 6"><path d="M0.4 3H6.6M4.2 0.6L6.8 3L4.2 5.4" stroke="#2e8b9a" stroke-width="1.1" fill="none"/></svg><div class="t tree" style="left:134.7px;top:424.8px">Triggers</div>
<svg style="left:102.20px;top:438.14px" width="6" height="6" viewBox="0 0 6 6"><rect x="0.4" y="0.4" width="5.2" height="5.2" rx="0.8" fill="#f7f7f7" stroke="#a4a4a4" stroke-width="0.7"/><path d="M1.7 3H4.3" stroke="#4a5aa8" stroke-width="0.9"/></svg><svg style="left:113.4px;top:438.4px" width="8" height="6.6" viewBox="0 0 8 6.6"><rect x="0.4" y="0.4" width="7.2" height="5.8" fill="#fff" stroke="#3a8fdd" stroke-width="0.8"/><path d="M0.4 0.7H7.6" stroke="#3a8fdd" stroke-width="0.9"/><path d="M0.6 3.5H7.4" stroke="#58a6e8" stroke-width="0.6"/><path d="M4 0.6V6" stroke="#a8d2f4" stroke-width="0.5"/></svg><div class="t tree" style="left:123.2px;top:437.0px;width:56.8px;overflow:hidden">iap_account</div>
<svg style="left:102.20px;top:450.37px" width="6" height="6" viewBox="0 0 6 6"><rect x="0.4" y="0.4" width="5.2" height="5.2" rx="0.8" fill="#f7f7f7" stroke="#a4a4a4" stroke-width="0.7"/><path d="M1.7 3H4.3" stroke="#4a5aa8" stroke-width="0.9"/></svg><svg style="left:113.4px;top:450.7px" width="8" height="6.6" viewBox="0 0 8 6.6"><rect x="0.4" y="0.4" width="7.2" height="5.8" fill="#fff" stroke="#3a8fdd" stroke-width="0.8"/><path d="M0.4 0.7H7.6" stroke="#3a8fdd" stroke-width="0.9"/><path d="M0.6 3.5H7.4" stroke="#58a6e8" stroke-width="0.6"/><path d="M4 0.6V6" stroke="#a8d2f4" stroke-width="0.5"/></svg><div class="t tree" style="left:123.2px;top:449.3px;width:56.8px;overflow:hidden">ir_act_client</div>
<svg style="left:102.20px;top:462.60px" width="6" height="6" viewBox="0 0 6 6"><rect x="0.4" y="0.4" width="5.2" height="5.2" rx="0.8" fill="#f7f7f7" stroke="#a4a4a4" stroke-width="0.7"/><path d="M1.7 3H4.3" stroke="#4a5aa8" stroke-width="0.9"/></svg><svg style="left:113.4px;top:462.9px" width="8" height="6.6" viewBox="0 0 8 6.6"><rect x="0.4" y="0.4" width="7.2" height="5.8" fill="#fff" stroke="#3a8fdd" stroke-width="0.8"/><path d="M0.4 0.7H7.6" stroke="#3a8fdd" stroke-width="0.9"/><path d="M0.6 3.5H7.4" stroke="#58a6e8" stroke-width="0.6"/><path d="M4 0.6V6" stroke="#a8d2f4" stroke-width="0.5"/></svg><div class="t tree" style="left:123.2px;top:461.5px;width:56.8px;overflow:hidden">ir_act_report_xml</div>
<div class="a" style="left:180.4px;top:95.5px;width:8.4px;height:374.5px;background:#f0f0f0"></div><div class="a" style="left:188.8px;top:95.5px;width:1.8px;height:383px;background:#e6e6e6"></div>
<div class="a" style="left:180.4px;top:168px;width:8.4px;height:80.8px;background:#c8c8c8"></div>
<svg style="left:182.2px;top:97.6px" width="5" height="3.4" viewBox="0 0 5 3.4"><path d="M0.4 3L2.5 0.7L4.6 3" stroke="#333" stroke-width="1" fill="none"/></svg>
<svg style="left:182.2px;top:464px" width="5" height="3.4" viewBox="0 0 5 3.4"><path d="M0.4 0.4L2.5 2.7L4.6 0.4" stroke="#333" stroke-width="1" fill="none"/></svg>
<div class="a" style="left:22px;top:470px;width:168px;height:8.5px;background:#f1f1f1"></div>
<div class="a" style="left:31px;top:470px;width:81.5px;height:8.5px;background:#c9c9c9"></div>
<svg style="left:25.5px;top:472px" width="3.4" height="5" viewBox="0 0 3.4 5"><path d="M3 0.3L0.6 2.5L3 4.7" stroke="#777" stroke-width="0.7" fill="none"/></svg>
<svg style="left:174.5px;top:472px" width="3.4" height="5" viewBox="0 0 3.4 5"><path d="M0.4 0.3L2.8 2.5L0.4 4.7" stroke="#444" stroke-width="0.8" fill="none"/></svg>
<div class="a" style="left:180.6px;top:470px;width:9.4px;height:8.5px;background:#e8e8e8"></div>
<div class="a" id="split"></div>
<div class="a" id="rtabs"></div>
<div class="a" style="left:510px;top:79px;width:183.2px;height:17.5px;background:#fff;border-radius:3px 3px 0 0"></div>
<div class="t rt" style="left:205.8px">Dashboard</div>
<div class="t rt" style="left:263.2px">Properties</div>
<div class="t rt" style="left:316.6px">SQL</div>
<div class="t rt" style="left:350px">Statistics</div>
<div class="t rt" style="left:398.6px">Dependencies</div>
<div class="t rt" style="left:464.8px">Dependents</div>
<svg style="left:195.4px;top:86.2px" width="7" height="7" viewBox="0 0 7 7"><circle cx="3.5" cy="3.5" r="3.4" fill="#222"/><path d="M3.5 4.4L4.9 1.8" stroke="#fff" stroke-width="0.8"/><circle cx="1.6" cy="3.4" r="0.6" fill="#fff"/><circle cx="2.5" cy="1.8" r="0.55" fill="#fff"/><circle cx="5.6" cy="3.8" r="0.55" fill="#fff"/><circle cx="3.5" cy="4.7" r="0.8" fill="#fff"/><path d="M1.6 5.6H5.4" stroke="#e8b060" stroke-width="0.5"/></svg>
<svg style="left:252.6px;top:85.6px" width="8" height="7.4" viewBox="0 0 8 7.4"><circle cx="2.6" cy="3.4" r="1.7" fill="none" stroke="#222" stroke-width="1.3"/><circle cx="6.2" cy="1.8" r="0.9" fill="none" stroke="#222" stroke-width="0.9"/><circle cx="6.2" cy="5.6" r="0.9" fill="none" stroke="#222" stroke-width="0.9"/></svg>
<svg style="left:307px;top:85.6px" width="6.4" height="7.4" viewBox="0 0 6.4 7.4"><path d="M0.4 0.4H4.2L6 2.2V7H0.4Z" fill="#fff" stroke="#444" stroke-width="0.7"/><path d="M1.6 3H4.8M1.6 4.3H4.8M1.6 5.6H4.8" stroke="#c9a23a" stroke-width="0.6"/></svg>
<svg style="left:339px;top:86px" width="8" height="6.6" viewBox="0 0 8 6.6"><path d="M0.4 0V6.2H8" stroke="#222" stroke-width="0.8" fill="none"/><path d="M1.6 4.6L3.2 2.6L4.6 3.8L7 1" stroke="#222" stroke-width="0.9" fill="none"/></svg>
<svg style="left:388.8px;top:85.4px" width="7.6" height="7.8" viewBox="0 0 7.6 7.8"><path d="M3.8 0.5L7.1 3.8L3.8 7.2L0.5 3.8Z" fill="#fff" stroke="#555" stroke-width="0.8" stroke-linejoin="round"/><path d="M1.6 4.6L3.8 6.9L6 4.6L4.4 5V3.4H3.2V5Z" fill="#333"/></svg>
<svg style="left:455.2px;top:85.4px" width="7.6" height="7.8" viewBox="0 0 7.6 7.8"><path d="M3.8 0.5L7.1 3.8L3.8 7.2L0.5 3.8Z" fill="#fff" stroke="#555" stroke-width="0.8" stroke-linejoin="round"/><path d="M0.6 3.8L2.6 1.8V3.2H4.2V4.6H2.6V5.9Z" fill="#333"/></svg>
<svg style="left:515.4px;top:85.4px" width="4" height="7.4" viewBox="0 0 4 7.4"><path d="M2.6 0L0.3 4H1.8L1.2 7.4L3.8 3H2.2Z" fill="#222"/></svg>
<div class="t" style="left:521.8px;top:85.8px;font-size:7.28px;color:#3a3a3a">Edit Data - Bank on openpg@PostgreSQL 9.5 (x86)</div>
<div class="a" style="left:784.2px;top:79.4px;width:12.6px;height:12.8px;background:#e4e4e4;border:0.8px solid #aaa;box-sizing:border-box;border-radius:2px"></div>
<svg style="left:788.2px;top:83.4px" width="4.6" height="4.6" viewBox="0 0 4.6 4.6"><path d="M0.5 0.5L4.1 4.1M4.1 0.5L0.5 4.1" stroke="#333" stroke-width="1.3"/></svg>
<div class="a" id="rtool"></div>
<div class="btn dis" style="left:193.6px;width:53.4px"></div>
<div class="bdiv" style="left:215.8px"></div><div class="bdiv" style="left:236px"></div>
<div class="btn " style="left:250px;width:33.6px"></div>
<div class="bdiv" style="left:271px"></div>
<div class="btn dis" style="left:287.6px;width:39.0px"></div>
<div class="bdiv" style="left:307px"></div>
<div class="btn dis" style="left:331px;width:19px"></div>
<div class="btn dis" style="left:354.4px;width:21.6px"></div>
<div class="btn " style="left:379.4px;width:30.8px"></div>
<div class="bdiv" style="left:400px"></div>
<div class="a" style="left:414.2px;top:98.8px;width:49.4px;height:17px;background:#fff;border:0.9px solid #9c9c9c;box-sizing:border-box;border-radius:1.5px"></div>
<div class="t" style="left:417.3px;top:103.8px;font-size:7.4px;color:#777">100 rows</div>
<svg style="left:454.6px;top:105.6px" width="5" height="3.2" viewBox="0 0 5 3.2"><path d="M0.4 0.4L2.5 2.6L4.6 0.4" stroke="#555" stroke-width="0.7" fill="none"/></svg>
<div class="btn " style="left:466px;width:31.4px"></div>
<div class="bdiv" style="left:487.6px"></div>
<div class="btn dis" style="left:499.4px;width:21.0px"></div>
<div class="btn " style="left:523px;width:21.6px"></div>
<div class="btn " style="left:547.8px;width:21.2px"></div>
<svg style="left:199.9px;top:103.3px" width="8.4" height="6.6" viewBox="0 0 8.4 6.6"><path d="M0.4 6V0.6H2.6L3.4 1.6H6V2.8M0.4 6L1.8 2.8H8L6.6 6Z" stroke="#5c5c5c" stroke-width="0.65" fill="none"/></svg>
<svg style="left:222.4px;top:103.2px" width="7" height="7" viewBox="0 0 7 7"><path d="M0.4 0.4H5.2L6.6 1.8V6.6H0.4Z" fill="#cfcfcf" stroke="#a2a2a2" stroke-width="0.6"/><rect x="1.6" y="0.6" width="3" height="2.2" fill="#f2f2f2" stroke="#a8a8a8" stroke-width="0.4"/><rect x="1.4" y="4.2" width="4.2" height="2.2" fill="#e2e2e2"/></svg>
<div class="a" style="left:239.8px;top:106.39999999999999px;width:0;height:0;border-left:2px solid transparent;border-right:2px solid transparent;border-top:2.4px solid #888"></div>
<svg style="left:257px;top:103px" width="7.6" height="7.6" viewBox="0 0 7.6 7.6"><circle cx="3.1" cy="3.1" r="2.4" fill="none" stroke="#222" stroke-width="1"/><path d="M4.9 4.9L7.1 7.1" stroke="#222" stroke-width="1.2"/></svg>
<div class="a" style="left:275.4px;top:106.39999999999999px;width:0;height:0;border-left:2px solid transparent;border-right:2px solid transparent;border-top:2.4px solid #222"></div>
<svg style="left:293.4px;top:103px" width="7.6" height="7.6" viewBox="0 0 7.6 7.6"><rect x="2.6" y="0.4" width="4" height="4.6" fill="none" stroke="#888" stroke-width="0.6"/><rect x="0.6" y="2.4" width="4" height="4.6" fill="#eee" stroke="#888" stroke-width="0.6"/></svg>
<svg style="left:313.4px;top:102.8px" width="7.4" height="8" viewBox="0 0 7.4 8"><rect x="0.3" y="0.6" width="5" height="6.6" fill="#666"/><rect x="3" y="2.6" width="4" height="5" fill="#fff" stroke="#666" stroke-width="0.6"/></svg>
<svg style="left:338.6px;top:104px" width="5.8" height="6.6" viewBox="0 0 5.8 6.6"><path d="M0.2 1.7H5.6M2 1.7V0.5H3.8V1.7" stroke="#555" stroke-width="0.7" fill="none"/><rect x="0.9" y="2.5" width="4" height="3.7" fill="#8a8a8a" stroke="#555" stroke-width="0.6"/></svg>
<svg style="left:358.8px;top:103.2px" width="7.6" height="7.4" viewBox="0 0 7.6 7.4"><path d="M5.6 4.4V6.8H0.4V1.6H3.4" stroke="#888" stroke-width="0.6" fill="none"/><path d="M2.6 4.8L3 3.4L6 0.4L7.2 1.6L4.2 4.6Z" fill="#999"/></svg>
<div class="a" style="left:368.8px;top:106.39999999999999px;width:0;height:0;border-left:2px solid transparent;border-right:2px solid transparent;border-top:2.4px solid #888"></div>
<svg style="left:386.4px;top:103.6px" width="7" height="7" viewBox="0 0 7 7"><path d="M0.2 0.3H6.8L4.2 3.2V6.8L2.8 5.8V3.2Z" fill="#222"/></svg>
<div class="a" style="left:403.2px;top:106.39999999999999px;width:0;height:0;border-left:2px solid transparent;border-right:2px solid transparent;border-top:2.4px solid #222"></div>
<svg style="left:475.2px;top:103px" width="4" height="8" viewBox="0 0 4 8"><path d="M2.6 0L0.3 4.2H1.8L1.2 8L3.8 3.2H2.2Z" fill="#222"/></svg>
<div class="a" style="left:490.6px;top:106.39999999999999px;width:0;height:0;border-left:2px solid transparent;border-right:2px solid transparent;border-top:2.4px solid #888"></div>
<div class="a" style="left:507px;top:104.4px;width:6.4px;height:6.4px;background:#777"></div>
<svg style="left:527.8px;top:104px" width="8" height="6" viewBox="0 0 8 6"><path d="M3 0.3H7.8L5 5.6H0.2Z" fill="#333"/><path d="M1.7 2.9H6.4" stroke="#ddd" stroke-width="0.5"/></svg>
<div class="a" style="left:537.4px;top:106.39999999999999px;width:0;height:0;border-left:2px solid transparent;border-right:2px solid transparent;border-top:2.4px solid #222"></div>
<svg style="left:555px;top:103px" width="7" height="7.4" viewBox="0 0 7 7.4"><path d="M2.4 0.2H4.6V2.6H6.2L3.5 5.2L0.8 2.6H2.4Z" fill="#222"/><rect x="0.2" y="5.6" width="6.6" height="1.5" fill="#222"/></svg>
<div class="a" style="left:191px;top:118px;width:24px;height:14px;background:#f4f4f4"></div>
<div class="a" id="bluebar"></div>
<svg style="left:198.6px;top:120.8px" width="8.6" height="8.4" viewBox="0 0 8.6 8.4"><g fill="none" stroke="#2c76b4" stroke-width="0.9"><rect x="0.6" y="3" width="5" height="3.4" rx="1.7" transform="rotate(-40 3.1 4.7)"/><rect x="3" y="2" width="5" height="3.4" rx="1.7" transform="rotate(-40 5.5 3.7)"/></g></svg>
<div class="t" style="left:217.6px;top:121.8px;font-size:7.27px;color:#fff">Bank on openpg@PostgreSQL 9.5 (x86)</div>
<div class="a" style="left:191px;top:132px;width:609px;height:69.5px;background:#fbfbfb"></div>
<div class="a" style="left:191px;top:132px;width:609px;height:5px;background:linear-gradient(#e6e6e6,#fbfbfb)"></div><div class="a" style="left:191px;top:132px;width:24.4px;height:69.5px;background:#f8f8f8"></div><div class="a" style="left:215.2px;top:132px;width:0.8px;height:69.5px;background:#dedede"></div>
<div class="t" style="left:200.6px;top:137.6px;font-size:7.6px;color:#b4b4b4;font-family:'Liberation Mono',monospace">1</div>
<div class="t" style="left:200.6px;top:148.6px;font-size:7.6px;color:#b4b4b4;font-family:'Liberation Mono',monospace">2</div>
<div class="t" style="left:200.6px;top:159.6px;font-size:7.6px;color:#b4b4b4;font-family:'Liberation Mono',monospace">3</div>
<div class="t" style="left:217.6px;top:137.8px;font-size:7.78px;font-family:'Liberation Mono',monospace"><span style="color:#c57fd0">SELECT</span> <span style="color:#aaa">*</span> <span style="color:#c57fd0">FROM</span> <span style="color:#b47fcc">public</span><span style="color:#8fb2d6">.gestion_facture</span></div>
<div class="t" style="left:217.6px;top:148.9px;font-size:7.78px;font-family:'Liberation Mono',monospace"><span style="color:#c57fd0">LIMIT</span> <span style="color:#cfa08e">100</span></div>
<div class="a" style="left:191px;top:201.3px;width:609px;height:1.2px;background:#ccc"></div>
<div class="a" style="left:191px;top:202.5px;width:609px;height:20px;background:#e8e8e8"></div>
<div class="a" style="left:191.5px;top:206px;width:49.7px;height:16.5px;background:#fff;border-radius:2.5px 2.5px 0 0"></div>
<div class="t" style="left:195.6px;top:212.9px;font-size:7.7px;color:#333">Data Output</div>
<div class="t" style="left:246.4px;top:212.94px;font-size:7.6px;color:#3b7fba">Explain</div>
<div class="t" style="left:280.4px;top:213.1px;font-size:7.2px;color:#3b7fba">Messages</div>
<div class="t" style="left:322.8px;top:212.88px;font-size:7.75px;color:#3b7fba">Notifications</div>
<div class="t" style="left:374.8px;top:212.92px;font-size:7.66px;color:#3b7fba">Query History</div>
<div class="a" style="left:191px;top:222.5px;width:609px;height:256px;background:#fff"></div>
<svg style="left:0;top:0" width="800" height="500" viewBox="0 0 800 500"><rect x="191.2" y="245" width="21.2" height="233.5" fill="#e9e9e9"/><path d="M191.2 255.20H576.4" stroke="#cbcbcb" stroke-width="0.8"/><path d="M191.2 269.14H576.4" stroke="#cbcbcb" stroke-width="0.8"/><path d="M191.2 283.08H576.4" stroke="#cbcbcb" stroke-width="0.8"/><path d="M191.2 297.02H576.4" stroke="#cbcbcb" stroke-width="0.8"/><path d="M191.2 310.96H576.4" stroke="#cbcbcb" stroke-width="0.8"/><path d="M191.2 324.90H576.4" stroke="#cbcbcb" stroke-width="0.8"/><path d="M191.2 338.84H576.4" stroke="#cbcbcb" stroke-width="0.8"/><path d="M191.2 352.78H576.4" stroke="#cbcbcb" stroke-width="0.8"/><path d="M191.2 366.72H576.4" stroke="#cbcbcb" stroke-width="0.8"/><path d="M191.2 380.66H576.4" stroke="#cbcbcb" stroke-width="0.8"/><path d="M191.2 394.60H576.4" stroke="#cbcbcb" stroke-width="0.8"/><path d="M191.2 408.54H576.4" stroke="#cbcbcb" stroke-width="0.8"/><path d="M191.2 422.48H576.4" stroke="#cbcbcb" stroke-width="0.8"/><path d="M191.2 436.42H576.4" stroke="#cbcbcb" stroke-width="0.8"/><path d="M191.2 450.36H576.4" stroke="#cbcbcb" stroke-width="0.8"/><path d="M191.2 464.30H576.4" stroke="#cbcbcb" stroke-width="0.8"/><path d="M191.2 478.24H576.4" stroke="#cbcbcb" stroke-width="0.8"/><path d="M212.40 245V478.5" stroke="#cbcbcb" stroke-width="0.8"/><path d="M250.30 245V478.5" stroke="#cbcbcb" stroke-width="0.8"/><path d="M313.50 245V478.5" stroke="#cbcbcb" stroke-width="0.8"/><path d="M380.50 245V478.5" stroke="#cbcbcb" stroke-width="0.8"/><path d="M445.50 245V478.5" stroke="#cbcbcb" stroke-width="0.8"/><path d="M508.00 245V478.5" stroke="#cbcbcb" stroke-width="0.8"/><path d="M576.00 245V478.5" stroke="#cbcbcb" stroke-width="0.8"/></svg>
<div class="t grid" style="left:191.2px;top:245.86px;width:21.2px;text-align:center">5</div><div class="t grid" style="left:212.4px;top:245.86px;width:35.5px;text-align:right">5</div><div class="t grid" style="left:253.70000000000002px;top:245.86px">rodian</div><div class="t grid" style="left:304.7px;top:245.86px;letter-spacing:0.5px;color:#333">...</div><div class="t grid" style="left:316.9px;top:245.86px">R2</div><div class="t grid" style="left:371.1px;top:245.86px;letter-spacing:0.5px;color:#333">...</div><div class="t grid" style="left:380.5px;top:245.86px;width:62.6px;text-align:right">20</div><div class="t grid" style="left:448.9px;top:245.86px">USD</div><div class="t grid" style="left:511.4px;top:245.86px">Wed Aug 29 18:59...</div>
<div class="t grid" style="left:191.2px;top:259.80px;width:21.2px;text-align:center">6</div><div class="t grid" style="left:212.4px;top:259.80px;width:35.5px;text-align:right">6</div><div class="t grid" style="left:253.70000000000002px;top:259.80px">rd</div><div class="t grid" style="left:316.9px;top:259.80px">r2</div><div class="t grid" style="left:371.1px;top:259.80px;letter-spacing:0.5px;color:#333">...</div><div class="t grid" style="left:380.5px;top:259.80px;width:62.6px;text-align:right">30</div><div class="t grid" style="left:448.9px;top:259.80px">USD</div><div class="t grid" style="left:511.4px;top:259.80px">Wed Aug 29 19:05...</div>
<div class="t grid" style="left:191.2px;top:273.74px;width:21.2px;text-align:center">7</div><div class="t grid" style="left:212.4px;top:273.74px;width:35.5px;text-align:right">7</div><div class="t grid" style="left:253.70000000000002px;top:273.74px">rd</div><div class="t grid" style="left:316.9px;top:273.74px">r2</div><div class="t grid" style="left:371.1px;top:273.74px;letter-spacing:0.5px;color:#333">...</div><div class="t grid" style="left:380.5px;top:273.74px;width:62.6px;text-align:right">20</div><div class="t grid" style="left:448.9px;top:273.74px">USD</div><div class="t grid" style="left:511.4px;top:273.74px">Wed Aug 29 19:08...</div>
<div class="t grid" style="left:191.2px;top:287.68px;width:21.2px;text-align:center">8</div><div class="t grid" style="left:212.4px;top:287.68px;width:35.5px;text-align:right">8</div><div class="t grid" style="left:253.70000000000002px;top:287.68px">rd</div><div class="t grid" style="left:316.9px;top:287.68px">r2</div><div class="t grid" style="left:371.1px;top:287.68px;letter-spacing:0.5px;color:#333">...</div><div class="t grid" style="left:380.5px;top:287.68px;width:62.6px;text-align:right">10000</div><div class="t grid" style="left:448.9px;top:287.68px">CDF</div><div class="t grid" style="left:511.4px;top:287.68px">Wed Aug 29 19:12...</div>
<div class="t grid" style="left:191.2px;top:301.62px;width:21.2px;text-align:center">9</div><div class="t grid" style="left:212.4px;top:301.62px;width:35.5px;text-align:right">9</div><div class="t grid" style="left:253.70000000000002px;top:301.62px">r3</div><div class="t grid" style="left:316.9px;top:301.62px">R3</div><div class="t grid" style="left:371.1px;top:301.62px;letter-spacing:0.5px;color:#333">...</div><div class="t grid" style="left:380.5px;top:301.62px;width:62.6px;text-align:right">15</div><div class="t grid" style="left:448.9px;top:301.62px">USD</div><div class="t grid" style="left:511.4px;top:301.62px">Wed Aug 29 19:15...</div>
<div class="t grid" style="left:191.2px;top:315.56px;width:21.2px;text-align:center">10</div><div class="t grid" style="left:212.4px;top:315.56px;width:35.5px;text-align:right">10</div><div class="t grid" style="left:253.70000000000002px;top:315.56px">Cartel</div><div class="t grid" style="left:304.7px;top:315.56px;letter-spacing:0.5px;color:#333">...</div><div class="t grid" style="left:316.9px;top:315.56px">A10</div><div class="t grid" style="left:371.1px;top:315.56px;letter-spacing:0.5px;color:#333">...</div><div class="t grid" style="left:380.5px;top:315.56px;width:62.6px;text-align:right">25</div><div class="t grid" style="left:448.9px;top:315.56px">USD</div><div class="t grid" style="left:511.4px;top:315.56px">Wed Aug 29 19:16...</div>
<div class="t grid" style="left:191.2px;top:329.50px;width:21.2px;text-align:center">11</div><div class="t grid" style="left:212.4px;top:329.50px;width:35.5px;text-align:right">11</div><div class="t grid" style="left:253.70000000000002px;top:329.50px">Emmanuel</div><div class="t grid" style="left:304.7px;top:329.50px;letter-spacing:0.5px;color:#333">...</div><div class="t grid" style="left:316.9px;top:329.50px">77</div><div class="t grid" style="left:371.1px;top:329.50px;letter-spacing:0.5px;color:#333">...</div><div class="t grid" style="left:380.5px;top:329.50px;width:62.6px;text-align:right">20000</div><div class="t grid" style="left:448.9px;top:329.50px">CDF</div><div class="t grid" style="left:511.4px;top:329.50px">Wed Aug 29 19:21...</div>
<div class="t grid" style="left:191.2px;top:343.44px;width:21.2px;text-align:center">12</div><div class="t grid" style="left:212.4px;top:343.44px;width:35.5px;text-align:right">12</div><div class="t grid" style="left:253.70000000000002px;top:343.44px">kab</div><div class="t grid" style="left:304.7px;top:343.44px;letter-spacing:0.5px;color:#333">...</div><div class="t grid" style="left:316.9px;top:343.44px">k1</div><div class="t grid" style="left:371.1px;top:343.44px;letter-spacing:0.5px;color:#333">...</div><div class="t grid" style="left:380.5px;top:343.44px;width:62.6px;text-align:right">10</div><div class="t grid" style="left:448.9px;top:343.44px">USD</div><div class="t grid" style="left:511.4px;top:343.44px">Wed Aug 29 19:23...</div>
<div class="t grid" style="left:191.2px;top:357.38px;width:21.2px;text-align:center">13</div><div class="t grid" style="left:212.4px;top:357.38px;width:35.5px;text-align:right">13</div><div class="t grid" style="left:253.70000000000002px;top:357.38px">rod</div><div class="t grid" style="left:304.7px;top:357.38px;letter-spacing:0.5px;color:#333">...</div><div class="t grid" style="left:316.9px;top:357.38px">F1</div><div class="t grid" style="left:371.1px;top:357.38px;letter-spacing:0.5px;color:#333">...</div><div class="t grid" style="left:380.5px;top:357.38px;width:62.6px;text-align:right">40</div><div class="t grid" style="left:448.9px;top:357.38px">USD</div><div class="t grid" style="left:511.4px;top:357.38px">Wed Aug 29 19:28...</div>
<div class="t grid" style="left:191.2px;top:371.32px;width:21.2px;text-align:center">14</div><div class="t grid" style="left:212.4px;top:371.32px;width:35.5px;text-align:right">14</div><div class="t grid" style="left:253.70000000000002px;top:371.32px">emma7</div><div class="t grid" style="left:304.7px;top:371.32px;letter-spacing:0.5px;color:#333">...</div><div class="t grid" style="left:316.9px;top:371.32px">A7</div><div class="t grid" style="left:371.1px;top:371.32px;letter-spacing:0.5px;color:#333">...</div><div class="t grid" style="left:380.5px;top:371.32px;width:62.6px;text-align:right">20000</div><div class="t grid" style="left:448.9px;top:371.32px">CDF</div><div class="t grid" style="left:511.4px;top:371.32px">Wed Aug 29 19:28...</div>
<div class="t grid" style="left:191.2px;top:385.26px;width:21.2px;text-align:center">15</div><div class="t grid" style="left:212.4px;top:385.26px;width:35.5px;text-align:right">15</div><div class="t grid" style="left:253.70000000000002px;top:385.26px">Telnet</div><div class="t grid" style="left:304.7px;top:385.26px;letter-spacing:0.5px;color:#333">...</div><div class="t grid" style="left:316.9px;top:385.26px">E100</div><div class="t grid" style="left:371.1px;top:385.26px;letter-spacing:0.5px;color:#333">...</div><div class="t grid" style="left:380.5px;top:385.26px;width:62.6px;text-align:right">10000</div><div class="t grid" style="left:448.9px;top:385.26px">CDF</div><div class="t grid" style="left:511.4px;top:385.26px">Wed Aug 29 19:32...</div>
<div class="t grid" style="left:191.2px;top:399.20px;width:21.2px;text-align:center">16</div><div class="t grid" style="left:212.4px;top:399.20px;width:35.5px;text-align:right">16</div><div class="t grid" style="left:253.70000000000002px;top:399.20px">vodacom Congo</div><div class="t grid" style="left:304.7px;top:399.20px;letter-spacing:0.5px;color:#333">...</div><div class="t grid" style="left:316.9px;top:399.20px">FAC/2018/0001</div><div class="t grid" style="left:371.1px;top:399.20px;letter-spacing:0.5px;color:#333">...</div><div class="t grid" style="left:380.5px;top:399.20px;width:62.6px;text-align:right">375000</div><div class="t grid" style="left:448.9px;top:399.20px">CDF</div><div class="t grid" style="left:511.4px;top:399.20px">Mon Sep 03 05:52...</div>
<div class="t grid" style="left:191.2px;top:413.14px;width:21.2px;text-align:center">17</div><div class="t grid" style="left:212.4px;top:413.14px;width:35.5px;text-align:right">17</div><div class="t grid" style="left:253.70000000000002px;top:413.14px">dany</div><div class="t grid" style="left:304.7px;top:413.14px;letter-spacing:0.5px;color:#333">...</div><div class="t grid" style="left:316.9px;top:413.14px">777</div><div class="t grid" style="left:371.1px;top:413.14px;letter-spacing:0.5px;color:#333">...</div><div class="t grid" style="left:380.5px;top:413.14px;width:62.6px;text-align:right">100</div><div class="t grid" style="left:448.9px;top:413.14px">CDF</div><div class="t grid" style="left:511.4px;top:413.14px">Fri Sep 07 16:29:2...</div>
<div class="t grid" style="left:191.2px;top:427.08px;width:21.2px;text-align:center">18</div><div class="t grid" style="left:212.4px;top:427.08px;width:35.5px;text-align:right">18</div><div class="t grid" style="left:253.70000000000002px;top:427.08px">vodacom_congo</div><div class="t grid" style="left:304.7px;top:427.08px;letter-spacing:0.5px;color:#333">...</div><div class="t grid" style="left:316.9px;top:427.08px">fac/2018/0007</div><div class="t grid" style="left:371.1px;top:427.08px;letter-spacing:0.5px;color:#333">...</div><div class="t grid" style="left:380.5px;top:427.08px;width:62.6px;text-align:right">442500</div><div class="t grid" style="left:448.9px;top:427.08px">CDF</div><div class="t grid" style="left:511.4px;top:427.08px">Fri Sep 07 16:29:2...</div>
<div class="t grid" style="left:191.2px;top:441.02px;width:21.2px;text-align:center">19</div><div class="t grid" style="left:212.4px;top:441.02px;width:35.5px;text-align:right">19</div><div class="t grid" style="left:253.70000000000002px;top:441.02px">VODACOM</div><div class="t grid" style="left:304.7px;top:441.02px;letter-spacing:0.5px;color:#333">...</div><div class="t grid" style="left:316.9px;top:441.02px">FAC/2018/0007</div><div class="t grid" style="left:371.1px;top:441.02px;letter-spacing:0.5px;color:#333">...</div><div class="t grid" style="left:380.5px;top:441.02px;width:62.6px;text-align:right">442500</div><div class="t grid" style="left:448.9px;top:441.02px">CDF</div><div class="t grid" style="left:511.4px;top:441.02px">Fri Sep 07 16:29:2...</div>
<div class="t grid" style="left:191.2px;top:454.96px;width:21.2px;text-align:center">20</div><div class="t grid" style="left:212.4px;top:454.96px;width:35.5px;text-align:right">20</div><div class="t grid" style="left:253.70000000000002px;top:454.96px">mavuela</div><div class="t grid" style="left:304.7px;top:454.96px;letter-spacing:0.5px;color:#333">...</div><div class="t grid" style="left:316.9px;top:454.96px">fac\2018\0008</div><div class="t grid" style="left:371.1px;top:454.96px;letter-spacing:0.5px;color:#333">...</div><div class="t grid" style="left:380.5px;top:454.96px;width:62.6px;text-align:right">44250</div><div class="t grid" style="left:448.9px;top:454.96px">CDF</div><div class="t grid" style="left:511.4px;top:454.96px">Tue Sep 11 15:13:...</div>
<div class="t grid" style="left:191.2px;top:468.90px;width:21.2px;text-align:center">21</div><div class="t grid" style="left:212.4px;top:468.90px;width:35.5px;text-align:right">21</div><div class="t grid" style="left:253.70000000000002px;top:468.90px">Rodian KABEYA</div><div class="t grid" style="left:304.7px;top:468.90px;letter-spacing:0.5px;color:#333">...</div><div class="t grid" style="left:316.9px;top:468.90px">FAC/2018/0014</div><div class="t grid" style="left:371.1px;top:468.90px;letter-spacing:0.5px;color:#333">...</div><div class="t grid" style="left:380.5px;top:468.90px;width:62.6px;text-align:right">36300</div><div class="t grid" style="left:448.9px;top:468.90px">CDF</div><div class="t grid" style="left:511.4px;top:468.90px">Sun Sep 16 20:03:...</div>
<svg style="left:0;top:0" width="800" height="500" viewBox="0 0 800 500"><rect x="191.2" y="222.5" width="385.2" height="22.5" fill="#e9e9e9"/><path d="M191.2 245H576.4" stroke="#c6c6c6" stroke-width="0.8"/><path d="M212.40 222.5V245" stroke="#cbcbcb" stroke-width="0.8"/><path d="M250.30 222.5V245" stroke="#cbcbcb" stroke-width="0.8"/><path d="M313.50 222.5V245" stroke="#cbcbcb" stroke-width="0.8"/><path d="M380.50 222.5V245" stroke="#cbcbcb" stroke-width="0.8"/><path d="M445.50 222.5V245" stroke="#cbcbcb" stroke-width="0.8"/><path d="M508.00 222.5V245" stroke="#cbcbcb" stroke-width="0.8"/><path d="M576.00 222.5V245" stroke="#cbcbcb" stroke-width="0.8"/><path d="M210 237.2V242.8H204.4Z" fill="#777"/></svg>
<div class="t" style="left:216.3px;top:227.3px;font-size:6.95px;color:#333;-webkit-text-stroke:0.22px #333">id</div><div class="t" style="left:216.3px;top:236.1px;font-size:6.85px;color:#777">integer</div>
<div class="t" style="left:254.20000000000002px;top:227.3px;font-size:6.95px;color:#333;-webkit-text-stroke:0.22px #333">nom_client</div><div class="t" style="left:254.20000000000002px;top:236.1px;font-size:6.85px;color:#777">character (30)</div>
<div class="t" style="left:317.4px;top:227.3px;font-size:6.95px;color:#333;-webkit-text-stroke:0.22px #333">numero_facture</div><div class="t" style="left:317.4px;top:236.1px;font-size:6.85px;color:#777">character (100)</div>
<div class="t" style="left:384.4px;top:227.3px;font-size:6.95px;color:#333;-webkit-text-stroke:0.22px #333">montant_paye</div><div class="t" style="left:384.4px;top:236.1px;font-size:6.85px;color:#777">real</div>
<div class="t" style="left:449.4px;top:227.3px;font-size:6.95px;color:#333;-webkit-text-stroke:0.22px #333">devise_paye</div><div class="t" style="left:449.4px;top:236.1px;font-size:6.85px;color:#777">character (15)</div>
<div class="t" style="left:511.9px;top:227.3px;font-size:6.95px;color:#333;-webkit-text-stroke:0.22px #333">date_eng</div><div class="t" style="left:511.9px;top:236.1px;font-size:6.85px;color:#777">character (100)</div>
<div class="a" style="left:791.8px;top:245.2px;width:8.2px;height:233px;background:#f0f0f0"></div>
<div class="a" style="left:791.8px;top:297px;width:8.2px;height:171.8px;background:#cbcbcb"></div>
<svg style="left:793.4px;top:247.8px" width="5" height="3.4" viewBox="0 0 5 3.4"><path d="M0.4 3L2.5 0.7L4.6 3" stroke="#333" stroke-width="1.1" fill="none"/></svg>
<svg style="left:793.4px;top:472px" width="5" height="3.4" viewBox="0 0 5 3.4"><path d="M0.4 0.4L2.5 2.7L4.6 0.4" stroke="#333" stroke-width="1" fill="none"/></svg>
<div class="a" id="side"></div>
<svg style="left:5.6px;top:5px" width="11.4" height="12.4" viewBox="0 0 11.4 12.4"><ellipse cx="5.7" cy="6.2" rx="5.6" ry="6.1" fill="#f0142a"/><ellipse cx="5.7" cy="6.2" rx="2.3" ry="4.6" fill="#1b1e21"/></svg>
<svg style="left:5.4px;top:50px" width="11.4" height="11.6" viewBox="0 0 11.4 11.6"><circle cx="5.7" cy="5.5" r="5.4" fill="#1e8df5"/><path d="M2.6 10L2.4 11.4L4.4 10.4Z" fill="#1e8df5"/><path d="M2.4 6.8L5 4L6.3 5.4L9 4L6.4 6.9L5.1 5.5Z" fill="#fff"/></svg>
<svg style="left:5.2px;top:74.6px" width="11.8" height="11.8" viewBox="0 0 11.8 11.8"><circle cx="6" cy="5.8" r="5.3" fill="#35c04a" stroke="#e8f5e8" stroke-width="0.8"/><path d="M1 11L1.8 8.4L3.6 10.2Z" fill="#35c04a"/><path d="M4 3.4C3.4 4.4 4.2 6 5.4 7C6.4 7.9 7.6 8.4 8.4 7.8L7.4 6.6L6.7 7C6 6.7 5.2 5.8 5 5.2L5.5 4.6L4.8 3.2Z" fill="#fff"/></svg>
<div class="a" style="left:7.4px;top:97.2px;width:7.6px;height:0.7px;background:#4a4d50"></div>
<svg style="left:6.2px;top:109.6px" width="10" height="10" viewBox="0 0 10 10"><circle cx="4.1" cy="4.1" r="3.3" fill="none" stroke="#cfcfcf" stroke-width="0.85"/><path d="M6.5 6.5L9.4 9.4" stroke="#cfcfcf" stroke-width="1.2"/></svg>
<svg style="left:6.2px;top:135px" width="10" height="9.4" viewBox="0 0 10 9.4"><path d="M0.6 0.6L9.4 4.7L0.6 8.8L2.4 4.7Z" stroke="#d8d8d8" stroke-width="0.9" fill="none" stroke-linejoin="round"/></svg>
<svg style="left:6px;top:160px" width="10.4" height="8.6" viewBox="0 0 10.4 8.6"><path d="M0.5 2H3L3.8 0.6H6.6L7.4 2H9.9V8.1H0.5Z" stroke="#d8d8d8" stroke-width="0.9" fill="none"/><circle cx="5.2" cy="4.9" r="1.7" stroke="#d8d8d8" stroke-width="0.9" fill="none"/></svg>
<div class="a" style="left:7.4px;top:181px;width:7.6px;height:0.7px;background:#4a4d50"></div>
<svg style="left:6.6px;top:194.2px" width="9" height="8" viewBox="0 0 9 8"><g fill="none" stroke="#d8d8d8" stroke-width="0.9"><rect x="0.5" y="0.5" width="3.3" height="2.5" rx="0.2"/><rect x="5.2" y="0.5" width="3.3" height="2.5" rx="0.2"/><rect x="0.5" y="4.7" width="3.3" height="2.5" rx="0.2"/><rect x="5.2" y="4.7" width="3.3" height="2.5" rx="0.2"/></g></svg>
<svg style="left:6.2px;top:218.6px" width="10" height="9.4" viewBox="0 0 10 9.4"><path d="M5 8.8C2 6.4 0.5 4.8 0.5 3C0.5 0.3 4 -0.2 5 2.2C6 -0.2 9.5 0.3 9.5 3C9.5 4.8 8 6.4 5 8.8Z" stroke="#d8d8d8" stroke-width="0.9" fill="none"/></svg>
<svg style="left:6px;top:244.6px" width="10.4" height="8.4" viewBox="0 0 10.4 8.4"><path d="M2.4 0.5H9.9V7.9H1.6C0.9 7.9 0.5 7.4 0.5 6.8V2.6H2.4Z" stroke="#d8d8d8" stroke-width="0.9" fill="none"/><path d="M2.4 2.6V6.8M4.2 2.6H8M4.2 4.4H8" stroke="#d8d8d8" stroke-width="0.8" fill="none"/></svg>
<svg style="left:6.4px;top:268.6px" width="9.6" height="9.6" viewBox="0 0 9.6 9.6"><circle cx="4.8" cy="4.8" r="4.2" stroke="#d8d8d8" stroke-width="0.9" fill="none"/><path d="M4.8 2.2V4.9L6.4 6.2" stroke="#d8d8d8" stroke-width="0.9" fill="none"/></svg>
<svg style="left:5.8px;top:451px" width="10" height="8" viewBox="0 0 10 8"><rect x="0.5" y="0.5" width="9" height="7" rx="0.8" stroke="#e8e8e8" stroke-width="1" fill="none"/><rect x="0.5" y="0.5" width="3.4" height="7" fill="#e8e8e8"/></svg>
<div class="a" id="task"></div>
<svg style="left:6px;top:482px" width="15.4" height="14" viewBox="0 0 15.4 14"><path d="M0 2L6.4 1.1V6.6H0ZM7.2 1L15.4 0V6.6H7.2ZM0 7.4H6.4V12.9L0 12ZM7.2 7.4H15.4V14L7.2 13Z" fill="#fff"/></svg>
<svg style="left:37.6px;top:480.4px" width="17.4" height="17.6" viewBox="0 0 17.4 17.6"><path d="M15.4 9.8H5.6C5.8 12.8 9.6 13.6 11.4 11.4H15C13.8 15 10.8 16.4 8 16.2C3.6 16 1.6 12.6 1.8 9.4C2 5.4 5.4 2.8 8.6 3C13 3.2 15.8 6.4 15.4 9.8ZM5.6 7.8H11.8C11.6 5 6 4.8 5.6 7.8Z" fill="#2aa3e6"/><path d="M1.6 16.2C-0.8 13 4 4.6 11.8 1.6C14.8 0.6 17 1.4 16.2 4.4" stroke="#f2c12e" stroke-width="1.2" fill="none"/></svg>
<div class="a" style="left:64.8px;top:478px;width:31.6px;height:22px;background:rgba(255,255,255,0.22);box-shadow:inset 0 0 0 0.6px rgba(255,255,255,0.18)"></div>
<svg style="left:72px;top:482.4px" width="17.6" height="15.4" viewBox="0 0 17.6 15.4"><path d="M0.4 15V1.4H5.6L7 0.4H15.6V3" fill="#f2d98a"/><rect x="0.4" y="3" width="16.8" height="12" fill="#f5e09a"/><rect x="2.4" y="0.9" width="2" height="1.2" fill="#3aa655"/><rect x="8" y="0.9" width="2" height="1.2" fill="#d8402a"/><rect x="11.4" y="1.6" width="2" height="1.2" fill="#2f7fd0"/><path d="M3.4 15V9.4C3.4 8.6 4 8 4.8 8H12.8C13.6 8 14.2 8.6 14.2 9.4V15H11.8V11.4H5.8V15Z" fill="#86c4ee"/><rect x="5.8" y="11.4" width="6" height="3.6" fill="#eef6fb"/></svg>
<svg style="left:106.4px;top:481.4px" width="17.6" height="16.8" viewBox="0 0 17.6 16.8"><rect width="17.6" height="16.8" fill="#0a8a0a"/><path d="M5.6 4.6C5.6 1.6 11.4 1.6 11.4 4.6" stroke="#fff" stroke-width="1" fill="none"/><path d="M2.6 4.6H15L14 14.2H3.6Z" fill="#fff"/><path d="M5 6.8L8.2 6.4V9H5ZM8.9 6.3L12.6 5.8V9H8.9ZM5 9.7H8.2V12.3L5 11.9ZM8.9 9.7H12.6V12.9L8.9 12.4Z" fill="#0a8a0a"/></svg>
<div class="a" style="left:134.6px;top:478px;width:32.0px;height:22px;background:rgba(255,255,255,0.2);box-shadow:inset 0 0 0 0.6px rgba(255,255,255,0.18)"></div>
<svg style="left:141.6px;top:481.2px" width="16.8" height="16.8" viewBox="0 0 16.8 16.8"><circle cx="8.4" cy="8.4" r="8.2" fill="#e33b2e"/><path d="M8.4 8.4L1.3 4.3A8.2 8.2 0 0 0 7 16.5L11 10.5Z" fill="#2ba24c"/><path d="M8.4 8.4L7 16.5A8.2 8.2 0 0 0 15.6 4.4H8.4Z" fill="#fbc116"/><circle cx="8.4" cy="8.4" r="3.9" fill="#fff"/><circle cx="8.4" cy="8.4" r="3.1" fill="#4a8af4"/></svg>
<div class="a" style="left:168px;top:478px;width:32.4px;height:22px;background:rgba(255,255,255,0.30);box-shadow:inset 0 0 0 0.6px rgba(255,255,255,0.18)"></div>
<svg style="left:176px;top:480.6px" width="16.4" height="18" viewBox="0 0 16.4 18"><ellipse cx="8.2" cy="9" rx="7.6" ry="8.6" fill="#e8142a"/><ellipse cx="8.2" cy="9" rx="3.1" ry="6.4" fill="#6a86b0"/></svg>
<div class="a" style="left:202.4px;top:478px;width:32.6px;height:22px;background:rgba(255,255,255,0.12);box-shadow:inset 0 0 0 0.6px rgba(255,255,255,0.18)"></div>
<svg style="left:210.4px;top:481px" width="17.6" height="17.6" viewBox="0 0 17.6 17.6"><path d="M2 2.4C4 0.2 8 0.4 9.6 1.6C12 0.2 16.6 1 16.6 5.4C16.6 8.6 14.4 11.6 13 11L12.6 15.6C12.2 17.6 9.4 17.4 9 15.6L8.8 11C6.4 12.6 3.2 10.6 1.8 7C1 5 1.2 3.4 2 2.4Z" fill="#3f77ae" stroke="#e8eef5" stroke-width="0.8"/><path d="M5.8 3C4.8 5.2 5.2 8.4 7 10.2M11 2.6C12.6 4 12.8 7 11.8 9.6M9.4 3V11" stroke="#e8eef5" stroke-width="0.7" fill="none"/></svg>
<div class="a" style="left:236px;top:478px;width:33px;height:22px;background:rgba(255,255,255,0.12);box-shadow:inset 0 0 0 0.6px rgba(255,255,255,0.18)"></div>
<svg style="left:244.4px;top:481.2px" width="16.4" height="17" viewBox="0 0 16.4 17"><path d="M8.2 0.4L16 3.6V12.8L8.2 16.6L0.4 12.8V3.6Z" fill="#1d2d4d"/><path d="M8.2 1.6L14.6 4.2L8.2 7L1.8 4.2Z" fill="#d6e6f2"/><path d="M1.6 5.2L7.6 7.8V15L1.6 12Z" fill="#a9c8de"/><path d="M14.8 5.2L8.8 7.8V15L14.8 12Z" fill="#7fa6c4"/></svg>
<svg style="left:279.6px;top:482px" width="16" height="15.6" viewBox="0 0 16 15.6"><path d="M1.4 3.2C0.4 2 1.8 0.6 3 1.6L7.6 5.4L8.6 4.6L10.4 5.2L12.2 5.6L14 6.6C15.6 8.4 15.4 11.4 13.6 13.6L12 15.2L6.6 14.2L2.2 10.2C1.4 9.2 2.4 8.2 3.4 8.8L5 9.6Z" fill="#fff" stroke="#222" stroke-width="0.9" stroke-linejoin="round"/><path d="M8.4 5L9.8 7.4M10.4 5.4L11.6 7.6M12.2 5.8L13.2 8" stroke="#222" stroke-width="0.7"/></svg>
<svg style="left:312.6px;top:481.4px" width="17" height="16.6" viewBox="0 0 17 16.6"><path d="M0.6 11.6L8 8.6L16.4 11L9 15.6Z" fill="#5a86c8"/><rect x="8" y="2" width="3" height="9" fill="#f2c21e"/><rect x="11.6" y="0.6" width="3" height="10" fill="#4fae3c"/><circle cx="5" cy="8" r="3.6" fill="#e02424"/></svg>
<svg style="left:347.4px;top:481px" width="17.2" height="17.2" viewBox="0 0 17.2 17.2"><circle cx="8.6" cy="8.6" r="8.4" fill="#e9f1fb"/><circle cx="8.6" cy="8.6" r="7.2" fill="#2d8cff"/><rect x="3.8" y="6" width="6.6" height="5.2" rx="1.2" fill="#fff"/><path d="M10.8 8L13.6 6.2V11L10.8 9.2Z" fill="#fff"/></svg>
<svg style="left:383px;top:481.4px" width="16.4" height="17" viewBox="0 0 16.4 17"><path d="M0.4 0.4H9.6C11.6 0.4 12.4 1.6 12.4 3V11H0.4Z" fill="#17365c"/><path d="M3.4 4.6H13C15 4.6 16 5.8 16 7.4V16.6H3.4Z" fill="#2db8e0"/><path d="M5.4 9.6H9.8V7.2L14.2 10.8L9.8 14.4V12H5.4Z" fill="#fff"/></svg>
<div class="a" style="left:410px;top:478px;width:31px;height:22px;background:rgba(255,255,255,0.12);box-shadow:inset 0 0 0 0.6px rgba(255,255,255,0.18)"></div>
<div class="a" style="left:417px;top:484px;width:16.2px;height:11.4px;background:#0a0a0a;border-top:1.6px solid #c9ccd4;box-sizing:border-box"></div><div class="t" style="left:418.6px;top:487px;font-size:3.6px;color:#ddd;font-family:'Liberation Mono',monospace">C:\_</div>
<div class="a" style="left:443.6px;top:478px;width:29.0px;height:22px;background:rgba(255,255,255,0.12);box-shadow:inset 0 0 0 0.6px rgba(255,255,255,0.18)"></div>
<svg style="left:449.6px;top:481.6px" width="17" height="16.4" viewBox="0 0 17 16.4"><rect x="4.6" y="0.6" width="12" height="15" fill="#fff" stroke="#c9d6ea" stroke-width="0.5"/><path d="M8 4H15M8 6.6H15M8 9.2H15M8 11.8H15" stroke="#9ab3da" stroke-width="0.7"/><rect x="0.4" y="2.6" width="10.6" height="11" fill="#2a5699"/></svg><div class="t" style="left:451px;top:484.4px;font-size:10px;font-weight:bold;color:#fff">W</div>
<div class="a" style="left:477.6px;top:478px;width:33.4px;height:22px;background:rgba(255,255,255,0.12);box-shadow:inset 0 0 0 0.6px rgba(255,255,255,0.18)"></div>
<svg style="left:486.2px;top:481px" width="17" height="17" viewBox="0 0 17 17"><rect x="0.3" y="0.3" width="16.4" height="16.4" rx="2.6" fill="#f1f1f1" stroke="#d0d0d0" stroke-width="0.5"/><path d="M8.6 2.4C6.4 4.2 10 5.2 7.6 7.6M10 4C8.8 5.2 10 6 8.8 7.2" stroke="#e8731c" stroke-width="0.9" fill="none"/><path d="M4.6 8.6H11.4V11.6C11.4 12.6 10.6 13.2 9.6 13.2H6.4C5.4 13.2 4.6 12.6 4.6 11.6ZM11.4 9.2C13.2 9 13.2 11.4 11.4 11.4M3.8 14.4H12.2" stroke="#7c8fa6" stroke-width="0.7" fill="none"/></svg>
<div class="a" style="left:513px;top:478px;width:32.4px;height:22px;background:rgba(255,255,255,0.12);box-shadow:inset 0 0 0 0.6px rgba(255,255,255,0.18)"></div>
<svg style="left:520.2px;top:481px" width="17" height="17" viewBox="0 0 17 17"><rect x="0.3" y="0.3" width="16.4" height="16.4" rx="2.6" fill="#f1f1f1" stroke="#d0d0d0" stroke-width="0.5"/><path d="M8.6 2.4C6.4 4.2 10 5.2 7.6 7.6M10 4C8.8 5.2 10 6 8.8 7.2" stroke="#e8731c" stroke-width="0.9" fill="none"/><path d="M4.6 8.6H11.4V11.6C11.4 12.6 10.6 13.2 9.6 13.2H6.4C5.4 13.2 4.6 12.6 4.6 11.6ZM11.4 9.2C13.2 9 13.2 11.4 11.4 11.4M3.8 14.4H12.2" stroke="#7c8fa6" stroke-width="0.7" fill="none"/></svg>
<div class="a" style="left:687.6px;top:488.4px;width:0;height:0;border-left:2px solid transparent;border-right:2px solid transparent;border-bottom:2.4px solid #fff"></div>
<svg style="left:699px;top:486.4px" width="10" height="9" viewBox="0 0 10 9"><path d="M0.6 0V8.6" stroke="#fff" stroke-width="0.9"/><path d="M1 0.6H6.6V5H1Z" fill="#fff"/><circle cx="6.6" cy="6" r="2.6" fill="#e21b1b"/><path d="M5.4 4.8L7.8 7.2M7.8 4.8L5.4 7.2" stroke="#fff" stroke-width="0.7"/></svg>
<svg style="left:712.6px;top:486px" width="10" height="9.6" viewBox="0 0 10 9.6"><rect x="4.6" y="1.6" width="4.6" height="7.4" fill="none" stroke="#fff" stroke-width="0.9"/><rect x="5.8" y="0.4" width="2.2" height="1.2" fill="#fff"/><path d="M1 1.4V4M3 1.4V4M0.4 4H3.6V6L2.6 6.8V9H1.4V6.8L0.4 6Z" stroke="#fff" stroke-width="0.7" fill="#fff"/></svg>
<svg style="left:726px;top:486.4px" width="10" height="9" viewBox="0 0 10 9"><path d="M0.4 8.4H1.6V6.6H0.4ZM2.4 8.4H3.6V5.4H2.4ZM4.4 8.4H5.6V4H4.4ZM6.4 8.4H7.6V2.4H6.4ZM8.4 8.4H9.6V0.6H8.4Z" fill="#cfd8e6"/><circle cx="5.6" cy="6" r="2.5" fill="#e21b1b"/><path d="M4.5 4.9L6.7 7.1M6.7 4.9L4.5 7.1" stroke="#fff" stroke-width="0.7"/></svg>
<svg style="left:739.4px;top:486.4px" width="9.6" height="9" viewBox="0 0 9.6 9"><path d="M0.4 3H2.2L4.8 0.6V8.4L2.2 6H0.4Z" fill="#fff"/><path d="M6 2.6C7 3.6 7 5.4 6 6.4M7.2 1.4C8.8 3 8.8 6 7.2 7.6" stroke="#dfe6f0" stroke-width="0.6" fill="none"/></svg>
<div class="t" style="left:766.2px;top:482.6px;font-size:6.3px;color:#fff">22:08</div>
<div class="t" style="left:757.8px;top:492px;font-size:6.3px;color:#fff">16/09/2018</div>
</div>
</body></html>
